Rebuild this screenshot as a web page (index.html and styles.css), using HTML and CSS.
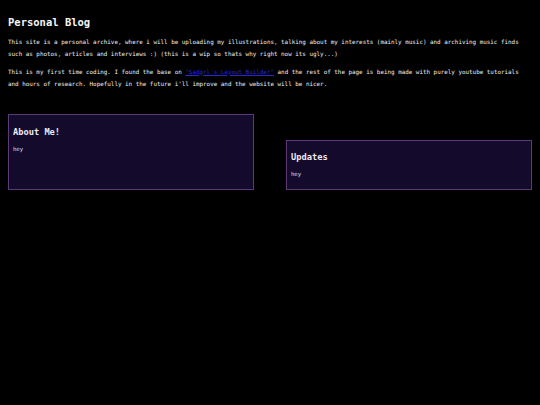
FILE: index.html
```html
<!DOCTYPE html>
<html lang="en">
<head>
<meta charset="utf-8">
<title>Personal Blog</title>
<link rel="stylesheet" href="styles.css">
</head>
<body>
<header class="intro">
  <h1 class="title">Personal Blog</h1>
  <p class="lead">This site is a personal archive, where i will be uploading my illustrations, talking about my interests (mainly music) and archiving music finds such as photos, articles and interviews :) (this is a wip so thats why right now its ugly...)</p>
  <p class="lead second">This is my first time coding. I found the base on <a class="link" href="#">"Sadgrl's Layout Builder"</a> and the rest of the page is being made with purely youtube tutorials and hours of research. Hopefully in the future i'll improve and the website will be nicer.</p>
</header>
<main class="cards">
  <section class="card card-tall">
    <h2 class="card-title">About Me!</h2>
    <p class="card-text">hey</p>
  </section>
  <section class="card card-short">
    <h2 class="card-title">Updates</h2>
    <p class="card-text">hey</p>
  </section>
</main>
</body>
</html>
```

FILE: styles.css
```css
html, body {
  background: #000;
}
body {
  margin: 8px;
  color: #f2f2f2;
  font-family: "DejaVu Sans Mono", "Liberation Mono", monospace;
}
.title {
  margin: 7px 0 0;
  font-size: 10.5px;
  line-height: 14px;
  font-weight: bold;
  color: #f4f4f4;
}
.lead {
  margin: 6.6px 0 0;
  font-size: 5.9px;
  line-height: 12.7px;
  color: #efefef;
}
.second {
  margin-top: 4.6px;
}
.link {
  color: #2626dc;
  text-decoration: underline;
}
.cards {
  display: flex;
  align-items: flex-end;
  gap: 32px;
  margin-top: 23px;
}
.card {
  flex: 1;
  box-sizing: border-box;
  background: #140a2c;
  border: 1px solid #5c3a78;
  padding: 0 4px;
}
.card-tall {
  height: 75.5px;
}
.card-short {
  height: 49.5px;
}
.card-title {
  margin: 11.5px 0 0;
  font-size: 8.7px;
  line-height: 11px;
  font-weight: bold;
  color: #eeeaf4;
}
.card-short .card-title {
  margin-top: 10.5px;
}
.card-text {
  margin: 7.5px 0 0;
  font-size: 5.6px;
  line-height: 8px;
  color: #e2dcea;
}
```
